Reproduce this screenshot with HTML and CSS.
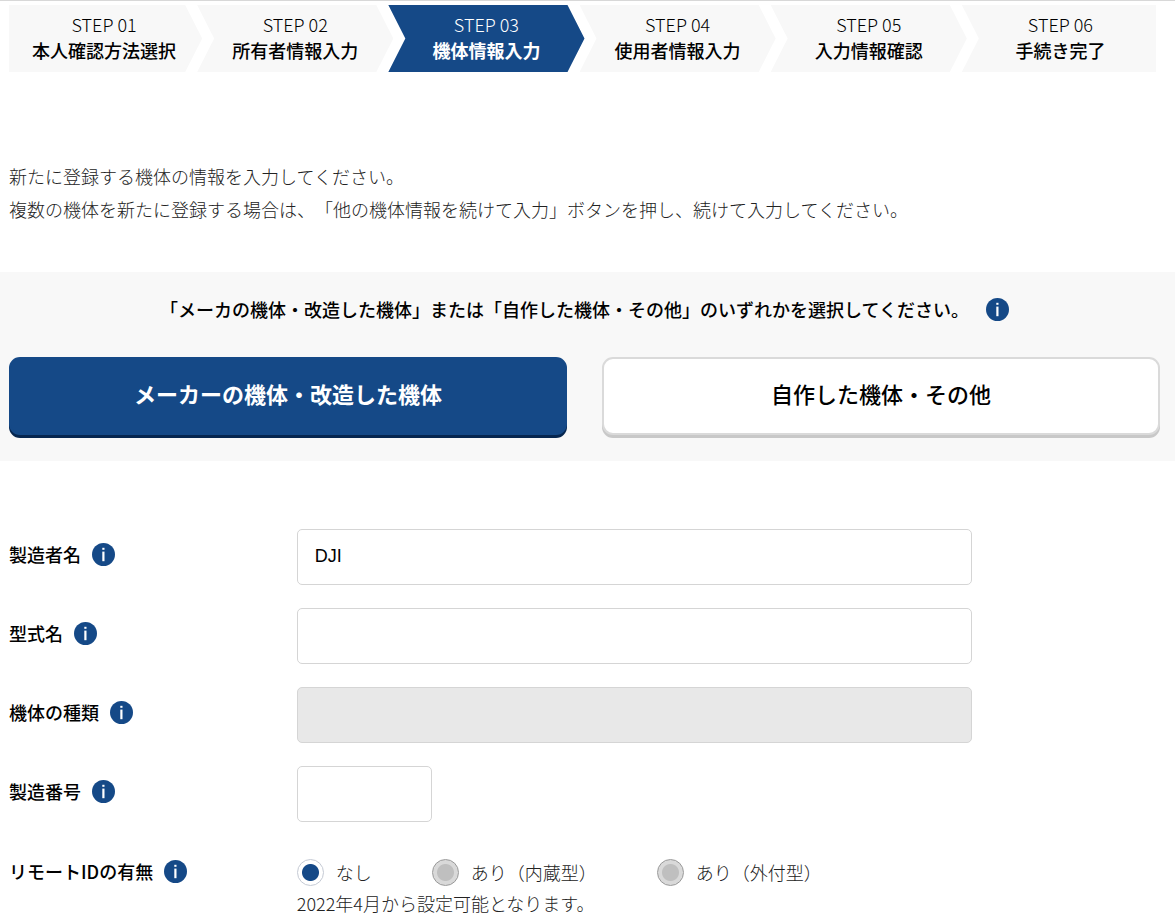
FILE: index.html
```html
<!DOCTYPE html>
<html lang="ja">
<head>
    <meta charset="UTF-8">
    <meta name="viewport" content="width=device-width, initial-scale=1.0">
    <title>機体情報入力</title>
    <link rel="stylesheet" href="styles.css">
</head>
<body>
    <svg class="sprite" aria-hidden="true">
        <symbol id="icon-info" viewBox="0 0 23 23">
            <circle cx="11.5" cy="11.5" r="11.5" fill="#154987"/>
            <rect x="10.3" y="4.8" width="2.2" height="2" fill="#fff"/>
            <rect x="10.3" y="8.6" width="2.2" height="9.6" fill="#fff"/>
        </symbol>
    </svg>

    <ol class="steps">
        <li class="step"><span class="step-no">STEP 01</span><span class="step-name">本人確認方法選択</span></li>
        <li class="step"><span class="step-no">STEP 02</span><span class="step-name">所有者情報入力</span></li>
        <li class="step active" aria-current="step"><span class="step-no">STEP 03</span><span class="step-name">機体情報入力</span></li>
        <li class="step"><span class="step-no">STEP 04</span><span class="step-name">使用者情報入力</span></li>
        <li class="step"><span class="step-no">STEP 05</span><span class="step-name">入力情報確認</span></li>
        <li class="step"><span class="step-no">STEP 06</span><span class="step-name">手続き完了</span></li>
    </ol>

    <main>
        <div class="intro">
            <p>新たに登録する機体の情報を入力してください。</p>
            <p>複数の機体を新たに登録する場合は、「他の機体情報を続けて入力」ボタンを押し、続けて入力してください。</p>
        </div>

        <section class="type-select">
            <div class="type-title">
                <p>「メーカの機体・改造した機体」または「自作した機体・その他」のいずれかを選択してください。</p>
                <button type="button" class="info" aria-label="説明"><svg><use href="#icon-info"/></svg></button>
            </div>
            <div class="type-buttons">
                <button type="button" class="btn-type selected">メーカーの機体・改造した機体</button>
                <button type="button" class="btn-type">自作した機体・その他</button>
            </div>
        </section>

        <form class="form">
            <div class="row">
                <div class="label">
                    <label for="maker">製造者名</label>
                    <button type="button" class="info" aria-label="説明"><svg><use href="#icon-info"/></svg></button>
                </div>
                <input type="text" id="maker" class="text" value="DJI">
            </div>
            <div class="row">
                <div class="label">
                    <label for="model">型式名</label>
                    <button type="button" class="info" aria-label="説明"><svg><use href="#icon-info"/></svg></button>
                </div>
                <input type="text" id="model" class="text">
            </div>
            <div class="row">
                <div class="label">
                    <label for="kind">機体の種類</label>
                    <button type="button" class="info" aria-label="説明"><svg><use href="#icon-info"/></svg></button>
                </div>
                <input type="text" id="kind" class="text" disabled>
            </div>
            <div class="row">
                <div class="label">
                    <label for="serial">製造番号</label>
                    <button type="button" class="info" aria-label="説明"><svg><use href="#icon-info"/></svg></button>
                </div>
                <input type="text" id="serial" class="text short">
            </div>
            <div class="row remote" role="radiogroup" aria-labelledby="remote-id">
                <div class="label">
                    <span id="remote-id">リモートIDの有無</span>
                    <button type="button" class="info" aria-label="説明"><svg><use href="#icon-info"/></svg></button>
                </div>
                <div class="field">
                    <div class="options">
                        <label class="option"><input type="radio" name="remote" checked>なし</label>
                        <label class="option"><input type="radio" name="remote" disabled>あり（内蔵型）</label>
                        <label class="option"><input type="radio" name="remote" disabled>あり（外付型）</label>
                    </div>
                    <p class="note">2022年4月から設定可能となります。</p>
                </div>
            </div>
        </form>
    </main>
</body>
</html>
```

FILE: styles.css
```css
* {
    margin: 0;
    padding: 0;
    box-sizing: border-box;
}

body {
    font-family: "Noto Sans CJK JP", sans-serif;
    font-size: 18px;
    font-weight: 300;
    line-height: 33px;
    color: #222;
    background: #fff;
    border-top: 1px solid #d8d8d8;
    text-spacing-trim: space-all;
}

.sprite {
    display: none;
}

/* Step navigation */
.steps {
    display: grid;
    grid-template-columns: repeat(6, 1fr);
    margin: 4px 19px 0 9px;
    list-style: none;
}

.step {
    display: flex;
    flex-direction: column;
    margin: 0 -2px 0 -3px;
    padding: 6px 0 9px;
    background: #f8f8f8;
    color: #000;
    line-height: 26px;
    text-align: center;
    white-space: nowrap;
    clip-path: polygon(0 0, calc(100% - 17px) 0, 100% 50%, calc(100% - 17px) 100%, 0 100%, 17px 50%);
}

.step:first-child {
    margin-left: 0;
    padding-right: 3px;
    clip-path: polygon(0 0, calc(100% - 17px) 0, 100% 50%, calc(100% - 17px) 100%, 0 100%);
}

.step:last-child {
    margin-right: 0;
    padding-left: 3px;
    clip-path: polygon(0 0, 100% 0, 100% 100%, 0 100%, 17px 50%);
}

.step-name {
    font-weight: 500;
}

.step.active {
    background: #154987;
    color: #fff;
}

.step.active .step-name {
    font-weight: 700;
}

.intro {
    padding: 88px 15px 46px 9px;
}

/* Info button */
.info {
    flex: none;
    width: 23px;
    height: 23px;
    border: none;
    background: none;
    cursor: pointer;
}

.info svg {
    display: block;
    width: 23px;
    height: 23px;
}

/* Aircraft type */
.type-select {
    padding: 21px 15px 26px 9px;
    background: #f8f8f8;
}

.type-title {
    display: flex;
    justify-content: center;
    align-items: center;
    gap: 17px;
    margin-bottom: 31px;
    color: #000;
    font-weight: 500;
}

.type-buttons {
    display: grid;
    grid-template-columns: 1fr 1fr;
    gap: 35px;
}

.btn-type {
    height: 78px;
    padding-bottom: 7px;
    border: 2px solid #dadada;
    border-radius: 11px;
    background: #fff;
    box-shadow: 0 3px 0 #c8c8c8;
    color: #000;
    font-family: inherit;
    font-size: 22px;
    font-weight: 500;
    cursor: pointer;
}

.btn-type.selected {
    border-color: #154987;
    background: #154987;
    box-shadow: 0 3px 0 #06264f;
    color: #fff;
    font-weight: 700;
}

/* Form */
.form {
    display: grid;
    gap: 23px;
    padding: 68px 15px 0 9px;
}

.row {
    display: grid;
    grid-template-columns: 25% 1fr;
    align-items: start;
}

.label {
    display: flex;
    align-items: center;
    gap: 11px;
    padding-top: 9px;
    color: #000;
    font-weight: 500;
}

.text {
    width: 100%;
    max-width: 675px;
    height: 56px;
    padding: 0 17px 2px;
    border: 1px solid #d5d5d5;
    border-radius: 5px;
    background: #fff;
    color: #000;
    font-family: "Liberation Sans", Arial, sans-serif;
    font-size: 18px;
}

.text:disabled {
    background: #e8e8e8;
}

.text.short {
    width: 135px;
}

.remote .label {
    padding-top: 10px;
}

.options {
    display: flex;
    flex-wrap: wrap;
    gap: 0 60px;
    padding-top: 11px;
}

.option {
    display: flex;
    align-items: center;
    gap: 12px;
}

.option input {
    appearance: none;
    width: 27px;
    height: 27px;
    border: 1px solid #c5cad4;
    border-radius: 50%;
    background: radial-gradient(circle, #154987 8px, #fff 9px);
}

.option input:disabled {
    border-color: #999;
    background: radial-gradient(circle, #bfbfbf 8px, #d9d9d9 9px);
}

.note {
    margin-top: 4px;
    line-height: 20px;
}
```
